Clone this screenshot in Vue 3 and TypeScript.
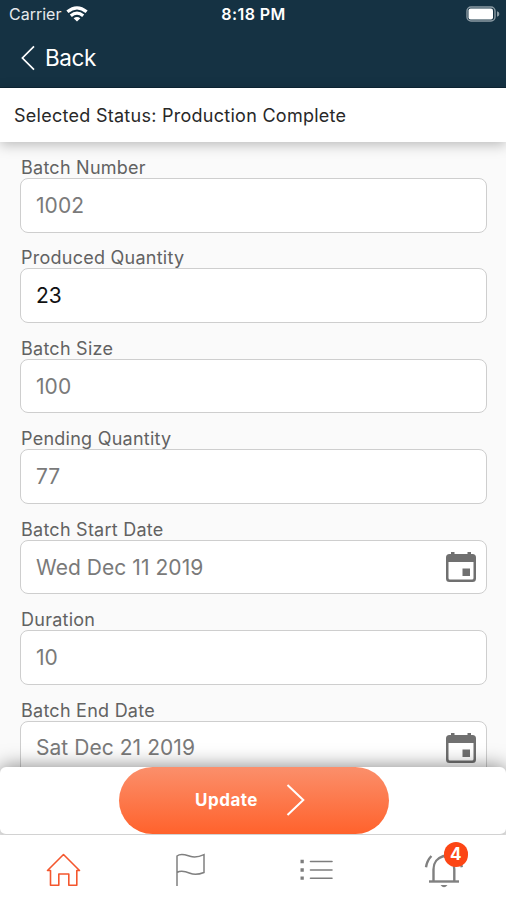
<script setup lang="ts">
interface Field {
  label: string
  value: string
  active?: boolean
  date?: boolean
}

const fields: Field[] = [
  { label: 'Batch Number', value: '1002' },
  { label: 'Produced Quantity', value: '23', active: true },
  { label: 'Batch Size', value: '100' },
  { label: 'Pending Quantity', value: '77' },
  { label: 'Batch Start Date', value: 'Wed Dec 11 2019', date: true },
  { label: 'Duration', value: '10' },
  { label: 'Batch End Date', value: 'Sat Dec 21 2019', date: true },
]
const alerts = 4
</script>

<template>
  <div class="screen">
    <header class="header">
      <div class="system">
        <div class="carrier">
          <span>Carrier</span>
          <svg width="22" height="16" viewBox="0 0 22 16" fill="none" stroke="#fff" stroke-width="3.2">
            <path d="M1.4 5.8Q11-2.2 20.6 5.8" />
            <path d="M4.8 9.8Q11 4.600 17.2 9.8" />
            <path d="M11 15.6L7.6 12.300Q11 9.6 14.4 12.300Z" fill="#fff" stroke="none" />
          </svg>
        </div>
        <time class="clock">8:18 PM</time>
        <div class="battery">
          <svg width="34" height="16" viewBox="0 0 34 16">
            <rect x="1" y="1" width="28" height="14" rx="4" fill="none" stroke="#8b9ba4" stroke-width="1.4" />
            <rect x="2.500" y="2.500" width="24.500" height="11" rx="2" fill="#fff" />
            <path d="M31 5.2Q33.4 6 33.4 8T31 10.8Z" fill="#8b9ba4" />
          </svg>
        </div>
      </div>
      <div class="back">
        <svg width="14" height="26" viewBox="0 0 14 26" fill="none" stroke="#fff" stroke-width="1.7">
          <path d="M13 1.4L1.4 13L13 24.6" />
        </svg>
        <span>Back</span>
      </div>
    </header>

    <div class="status"><span>Selected Status: Production Complete</span></div>

    <main class="form">
      <div v-for="field in fields" :key="field.label" class="field">
        <label class="label">{{ field.label }}</label>
        <div class="box" :class="{ active: field.active }">
          <span class="value">{{ field.value }}</span>
          <svg v-if="field.date" width="32" height="32" viewBox="0 0 32 32">
            <path
              fill="#707070"
              fill-rule="evenodd"
              d="M6 1h3.5v2h13V1H26v2h1.500q3.500 0 3.500 3.500v21q0 3.500-3.500 3.500h-23q-3.500 0-3.500-3.500v-21Q1 3 4.500 3H6zM3.500 11v16q0 1.500 1.500 1.500h22q1.500 0 1.500-1.500V11z"
            />
            <rect x="17.500" y="17.500" width="7.500" height="7.500" fill="#707070" />
          </svg>
        </div>
      </div>
    </main>

    <section class="actions">
      <button class="update">
        <span>Update</span>
        <svg width="19" height="34" viewBox="0 0 19 34" fill="none" stroke="#fff" stroke-width="2">
          <path d="M1.500 2L17.300 17L1.500 32" />
        </svg>
      </button>
    </section>

    <nav class="tabs">
      <a class="tab">
        <svg class="icon" width="36" height="36" viewBox="0 0 36 36" fill="none" stroke="#f4572e" stroke-width="1.600" stroke-linejoin="round">
          <path d="M2.500 18.500L18.500 2.500L34.500 18.500H31.800V33.300H23.800V22H13.800V33.300H5.500V18.500Z" />
        </svg>
      </a>
      <a class="tab">
        <svg class="icon" width="36" height="36" viewBox="0 0 36 36" fill="none" stroke="#808080" stroke-width="1.500">
          <path d="M5 34V4C9 .5 14 3 18 4.300S27 5 32 2.600V20.500C27 22.500 22 23 18 21.300S9 18 5 20.500" />
        </svg>
      </a>
      <a class="tab">
        <svg class="icon" width="36" height="36" viewBox="0 0 36 36" fill="none" stroke="#7d7d7d">
          <path d="M12.500 9.500H34M12.500 18H34M12.500 26.200H34" stroke-width="1.600" stroke-linecap="round" />
          <path d="M2.500 9.500H5.800M2.500 18H5.800M2.500 26.200H5.800" stroke-width="3.300" />
        </svg>
      </a>
      <a class="tab">
        <svg class="icon" width="40" height="36" viewBox="0 0 40 36" fill="none" stroke="#808080" stroke-width="2.400">
          <path d="M10.500 29V17.500C10.500 9 15 6 20.500 4C26 6 31.300 9 31.300 17.500V29" />
          <path d="M6 29.500H36" />
          <path d="M3 15.200Q4 8.500 8.400 4M38.800 15.200Q37.800 8.500 33.400 4" />
          <path d="M17.500 33H24.500Q21 37.500 17.500 33Z" fill="#808080" stroke="none" />
        </svg>
        <span class="badge">{{ alerts }}</span>
      </a>
    </nav>
  </div>
</template>

<style>
body {
  margin: 0;
}
</style>

<style scoped>
.screen {
  display: flex;
  flex-direction: column;
  height: 900px;
  overflow: hidden;
  background: #fafafa;
  font-family: Inter, 'Liberation Sans', sans-serif;
}
svg {
  display: block;
  flex: none;
}
.header {
  flex: none;
  box-sizing: border-box;
  height: 88px;
  background: #153243;
  border-bottom: 1px solid #0d2635;
  color: #fff;
}
.system {
  display: grid;
  grid-template-columns: 1fr auto 1fr;
  align-items: center;
  height: 28px;
  padding: 0 6px 0 9px;
}
.carrier {
  display: flex;
  align-items: center;
  gap: 5px;
  color: #e5eaed;
  font-size: 16px;
  letter-spacing: 0;
}
.clock {
  margin-left: -2px;
  font-size: 16px;
  font-weight: 600;
  letter-spacing: 0.4px;
}
.battery {
  justify-self: end;
}
.back {
  display: flex;
  align-items: center;
  gap: 10px;
  height: 59px;
  padding-left: 21px;
  font-size: 22.500px;
  letter-spacing: -0.4px;
}
.status {
  flex: none;
  display: flex;
  align-items: center;
  height: 54px;
  padding-left: 14px;
  background: #fff;
  box-shadow: 0 3px 12px rgba(0, 0, 0, 0.25);
  color: #282828;
  font-size: 18px;
  letter-spacing: 0.27px;
  z-index: 1;
}
.form {
  flex: 1;
  min-height: 0;
  overflow: hidden;
  padding: 15px 19px 0 20px;
}
.field {
  height: 90.450px;
}
.label {
  display: block;
  height: 21px;
  padding-left: 1px;
  color: #626262;
  font-size: 18px;
  line-height: 21px;
  letter-spacing: 0.25px;
}
.box {
  box-sizing: border-box;
  display: flex;
  align-items: center;
  justify-content: space-between;
  height: 54.500px;
  padding: 0 9px 0 15px;
  border: 1.500px solid #cecece;
  border-radius: 8px;
  background: #fff;
  color: #7a7a7a;
  font-size: 21px;
  letter-spacing: 0.05px;
}
.box.active {
  color: #111;
}
.actions {
  flex: none;
  box-sizing: border-box;
  display: flex;
  justify-content: center;
  height: 68px;
  padding-left: 1px;
  border-bottom: 1px solid #d2d2d2;
  border-radius: 6px;
  background: #fff;
  box-shadow: 0 0 20px rgba(0, 0, 0, 0.5);
}
.update {
  display: flex;
  align-items: center;
  justify-content: center;
  gap: 28px;
  width: 270px;
  height: 67px;
  padding: 0 7px 2px 0;
  border: 0;
  border-radius: 34px;
  background: linear-gradient(#fb8f6b, #ff622c);
  color: #fff;
  font-family: inherit;
  font-size: 17px;
  font-weight: 700;
  letter-spacing: 0.5px;
}
.tabs {
  flex: none;
  display: grid;
  grid-template-columns: repeat(4, 1fr);
  height: 65px;
  background: #fff;
  z-index: 1;
}
.tab {
  position: relative;
  display: flex;
  align-items: center;
  justify-content: center;
  padding-top: 4px;
}
.badge {
  position: absolute;
  top: 7px;
  right: 38px;
  display: flex;
  align-items: center;
  justify-content: center;
  width: 24.500px;
  height: 24.500px;
  border-radius: 50%;
  background: #fc4615;
  color: #fff;
  font-size: 17px;
  font-weight: 700;
}
</style>
